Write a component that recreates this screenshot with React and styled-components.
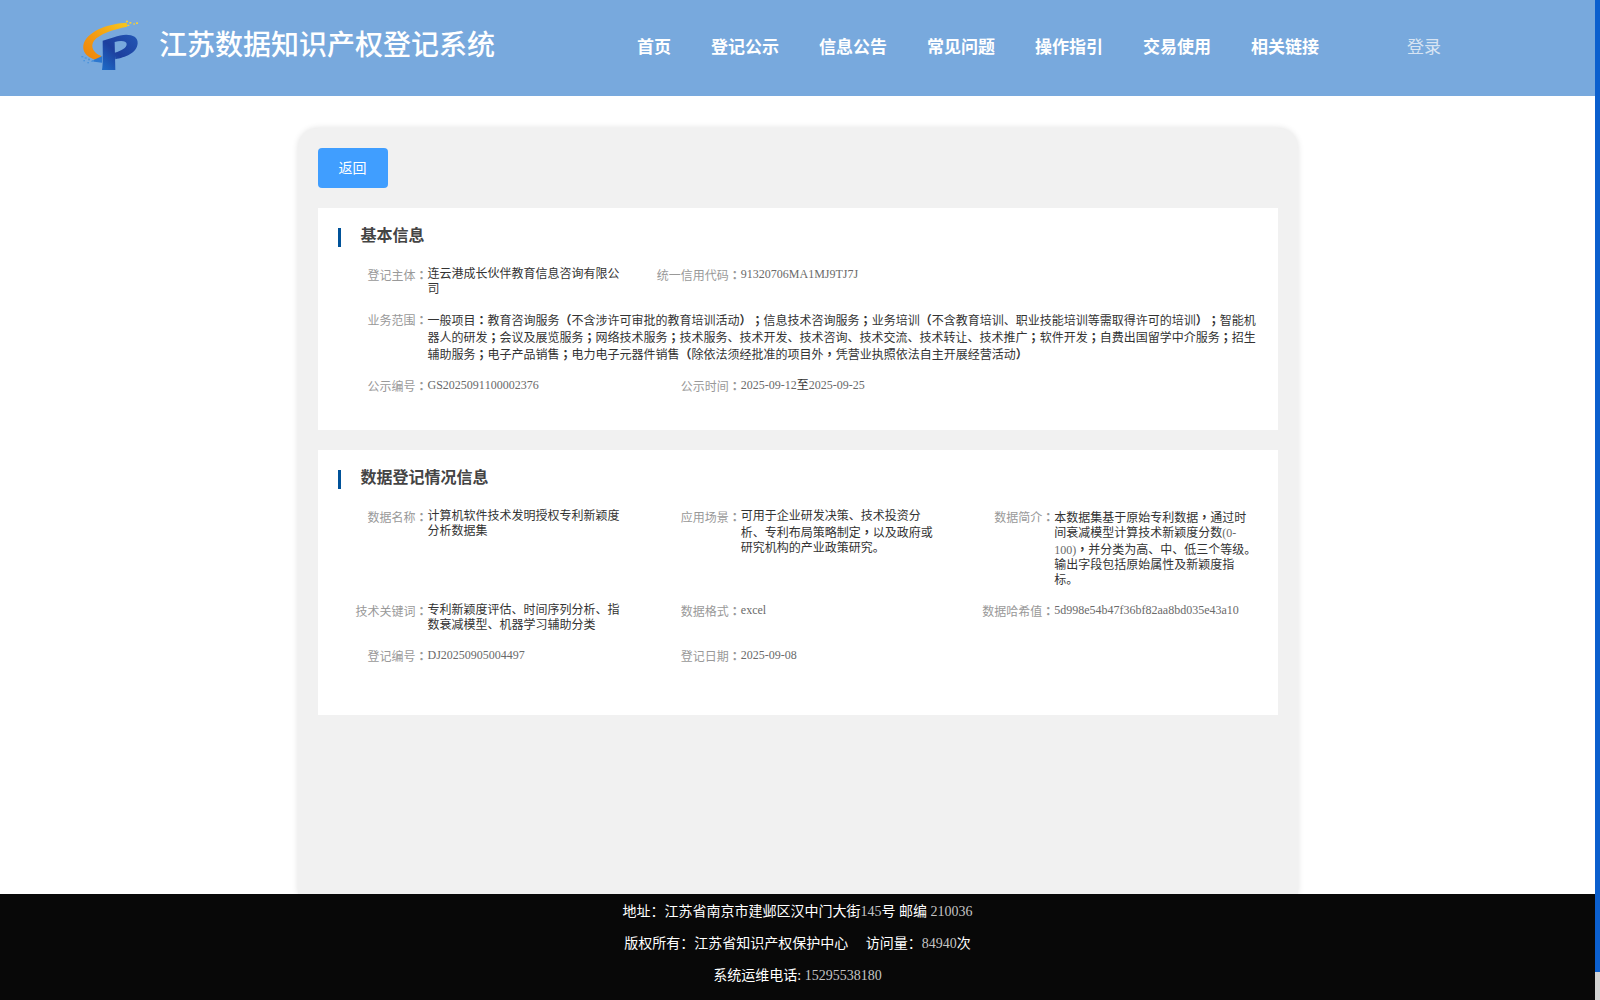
import React from "react";
import styled, { createGlobalStyle } from "styled-components";

const Global = createGlobalStyle`
  html, body { margin: 0; padding: 0; height: 100%; overflow: hidden; background: #fff; }
  body {
    font-family: "Liberation Serif", "Noto Sans CJK SC", serif;
    text-spacing-trim: space-all;
    font-feature-settings: "palt" 0, "chws" 0, "kern" 0;
  }
  #root { height: 100%; }
  * { box-sizing: border-box; }
`;

const Viewport = styled.div`
  display: flex;
  width: 1600px;
  height: 1000px;
`;
const Page = styled.div`
  flex: 1;
  display: flex;
  flex-direction: column;
  min-width: 0;
`;
const Scrollbar = styled.div`
  width: 5px;
  display: flex;
  flex-direction: column;
  background: #d2d2d2;
`;
const ScrollThumb = styled.div`
  height: 972px;
  background: #0b5fce;
`;
const Header = styled.header`
  flex: none;
  height: 96px;
  background: #78a9dd;
  display: flex;
  align-items: center;
  padding-left: 80px;
`;
const Logo = styled.svg`
  width: 60px;
  height: 52px;
  margin: -4px 19px 0 0;
  flex: none;
`;
const Title = styled.h1`
  margin: 0;
  width: 336px;
  font-size: 28px;
  line-height: 36px;
  font-weight: 500;
  color: #fff;
  white-space: nowrap;
  position: relative;
  top: -2px;
`;
const Nav = styled.nav`
  display: flex;
  gap: 40px;
  margin-left: 142px;
`;
const NavLink = styled.a`
  font-size: 17px;
  line-height: 22px;
  font-weight: 700;
  color: #fff;
  white-space: nowrap;
`;
const Login = styled.a`
  margin-left: 88px;
  font-size: 17px;
  line-height: 22px;
  color: #d7e4f3;
  white-space: nowrap;
`;
const Content = styled.main`
  flex: 1;
  min-height: 0;
  display: flex;
  justify-content: center;
  padding-top: 32px;
`;
const Card = styled.div`
  width: 1000px;
  background: #f1f1f1;
  border-radius: 20px 20px 0 0;
  box-shadow: 0 0 6px rgba(0, 0, 0, 0.12);
  padding: 20px;
`;
const BackButton = styled.button`
  display: block;
  width: 70px;
  height: 40px;
  border: 0;
  border-radius: 4px;
  background: #409eff;
  color: #fff;
  font: inherit;
  font-size: 14px;
  padding: 0 0 2px;
  margin-bottom: 20px;
`;
const Section = styled.section`
  background: #fff;
  padding: 20px 10px ${(p) => p.$bottom}px;
  margin-bottom: 20px;
`;
const SectionTitle = styled.h2`
  display: flex;
  align-items: flex-start;
  height: 19px;
  margin: 0 0 20px 10px;
  font-size: 16px;
  line-height: 15px;
  font-weight: 700;
  color: #444;
  &::before {
    content: "";
    width: 3px;
    height: 19px;
    background: #005299;
    margin-right: 20px;
  }
`;
const Rows = styled.div`
  display: grid;
  grid-template-columns: repeat(3, 1fr);
  row-gap: 15px;
`;
const Field = styled.div`
  display: flex;
  grid-column: ${(p) => p.$span || "auto"};
  font-size: 12px;
  line-height: 15px;
`;
const Label = styled.span`
  flex: none;
  width: 100px;
  text-align: right;
  color: #999;
`;
const Value = styled.span`
  flex: 1;
  min-width: 0;
  padding-right: 10px;
  color: #333;
`;
const Punct = styled.span`
  font-family: "Noto Sans CJK TC", sans-serif;
  font-weight: 700;
`;
const Latin = styled.span`
  color: ${(p) => p.$color};
`;
const Footer = styled.footer`
  flex: none;
  height: 106px;
  background: #080808;
  padding-top: 2px;
  color: #fff;
  text-align: center;
  font-size: 14px;
  line-height: 32px;
  position: relative;
  z-index: 1;
`;
const FooterLine = styled.div`
  white-space: pre-wrap;
`;

const LogoMark = () => (
  <Logo viewBox="30 30 180 156" aria-hidden="true">
    <defs>
      <linearGradient id="sw" x1="1" y1="0" x2="0" y2="1">
        <stop offset="0" stopColor="#f7c81e" />
        <stop offset="0.55" stopColor="#f39a12" />
        <stop offset="1" stopColor="#ee8209" />
      </linearGradient>
      <linearGradient id="pb" x1="0" y1="1" x2="1" y2="0">
        <stop offset="0" stopColor="#1e6cc8" />
        <stop offset="0.45" stopColor="#1d3f9e" />
        <stop offset="1" stopColor="#2357b5" />
      </linearGradient>
    </defs>
    <path d="M170 38C120 40 58 60 42 98C34 120 46 146 92 152L94 138C70 128 60 110 72 92C88 72 130 58 172 50Z" fill="url(#sw)" />
    <path d="M98 92L132 82C165 68 205 72 203 100C201 130 165 142 136 148L134 128C155 122 170 114 170 102C170 92 152 90 134 96L136 180L96 180C100 160 98 120 98 92Z" fill="url(#pb)" />
    <path d="M62 154L97 138L96 158Z" fill="#2d78d0" />
    <g fill="#f5cf3a">
      <rect x="168" y="32" width="6" height="5" /><rect x="178" y="36" width="6" height="5" /><rect x="190" y="40" width="5" height="4" />
      <rect x="198" y="37" width="6" height="5" /><rect x="172" y="44" width="6" height="4" />
    </g>
    <g fill="#4f95dc">
      <rect x="34" y="138" width="6" height="4" /><rect x="44" y="142" width="6" height="4" /><rect x="54" y="146" width="6" height="5" />
      <rect x="40" y="150" width="5" height="4" /><rect x="66" y="151" width="6" height="5" /><rect x="52" y="156" width="5" height="4" />
    </g>
  </Logo>
);

const navItems = ["首页", "登记公示", "信息公告", "常见问题", "操作指引", "交易使用", "相关链接"];

const tokens = /([，；：（）]+|[A-Za-z0-9][A-Za-z0-9\-]*|[()\-]+)/;
const Rich = ({ text, latin = "#6a6a6a" }) =>
  text.split(tokens).map((part, i) => {
    if (!part) return null;
    if (/^[，；：（）]/.test(part)) return <Punct key={i}>{part}</Punct>;
    if (/^[A-Za-z0-9()\-]/.test(part)) return <Latin key={i} $color={latin}>{part}</Latin>;
    return part;
  });

const Item = ({ label, text, span }) => (
  <Field $span={span}>
    <Label>{label}<Punct>：</Punct></Label>
    <Value><Rich text={text} /></Value>
  </Field>
);

export default function App() {
  return (
    <Viewport>
      <Global />
      <Page>
        <Header>
          <LogoMark />
          <Title>江苏数据知识产权登记系统</Title>
          <Nav>
            {navItems.map((n) => (
              <NavLink key={n}>{n}</NavLink>
            ))}
          </Nav>
          <Login>登录</Login>
        </Header>
        <Content>
          <Card>
            <BackButton>返回</BackButton>
            <Section $bottom={35}>
              <SectionTitle>基本信息</SectionTitle>
              <Rows>
                <Item label="登记主体" text="连云港成长伙伴教育信息咨询有限公司" />
                <Item label="统一信用代码" span="span 2" text="91320706MA1MJ9TJ7J" />
                <Item
                  label="业务范围"
                  span="1 / -1"
                  text="一般项目：教育咨询服务（不含涉许可审批的教育培训活动）；信息技术咨询服务；业务培训（不含教育培训、职业技能培训等需取得许可的培训）；智能机器人的研发；会议及展览服务；网络技术服务；技术服务、技术开发、技术咨询、技术交流、技术转让、技术推广；软件开发；自费出国留学中介服务；招生辅助服务；电子产品销售；电力电子元器件销售（除依法须经批准的项目外，凭营业执照依法自主开展经营活动）"
                />
                <Item label="公示编号" text="GS2025091100002376" />
                <Item label="公示时间" span="span 2" text="2025-09-12至2025-09-25" />
              </Rows>
            </Section>
            <Section $bottom={50}>
              <SectionTitle>数据登记情况信息</SectionTitle>
              <Rows>
                <Item label="数据名称" text="计算机软件技术发明授权专利新颖度分析数据集" />
                <Item label="应用场景" text="可用于企业研发决策、技术投资分析、专利布局策略制定，以及政府或研究机构的产业政策研究。" />
                <Item label="数据简介" text="本数据集基于原始专利数据，通过时间衰减模型计算技术新颖度分数(0-100)，并分类为高、中、低三个等级。输出字段包括原始属性及新颖度指标。" />
                <Item label="技术关键词" text="专利新颖度评估、时间序列分析、指数衰减模型、机器学习辅助分类" />
                <Item label="数据格式" text="excel" />
                <Item label="数据哈希值" text="5d998e54b47f36bf82aa8bd035e43a10" />
                <Item label="登记编号" text="DJ20250905004497" />
                <Item label="登记日期" text="2025-09-08" />
              </Rows>
            </Section>
          </Card>
        </Content>
        <Footer>
          <FooterLine>地址：江苏省南京市建邺区汉中门大街<Latin $color="#c4c4c4">145</Latin>号 邮编 <Latin $color="#c4c4c4">210036</Latin></FooterLine>
          <FooterLine>版权所有：江苏省知识产权保护中心     访问量：<Latin $color="#c4c4c4">84940</Latin>次</FooterLine>
          <FooterLine>系统运维电话: <Latin $color="#c4c4c4">15295538180</Latin></FooterLine>
        </Footer>
      </Page>
      <Scrollbar>
        <ScrollThumb />
      </Scrollbar>
    </Viewport>
  );
}
